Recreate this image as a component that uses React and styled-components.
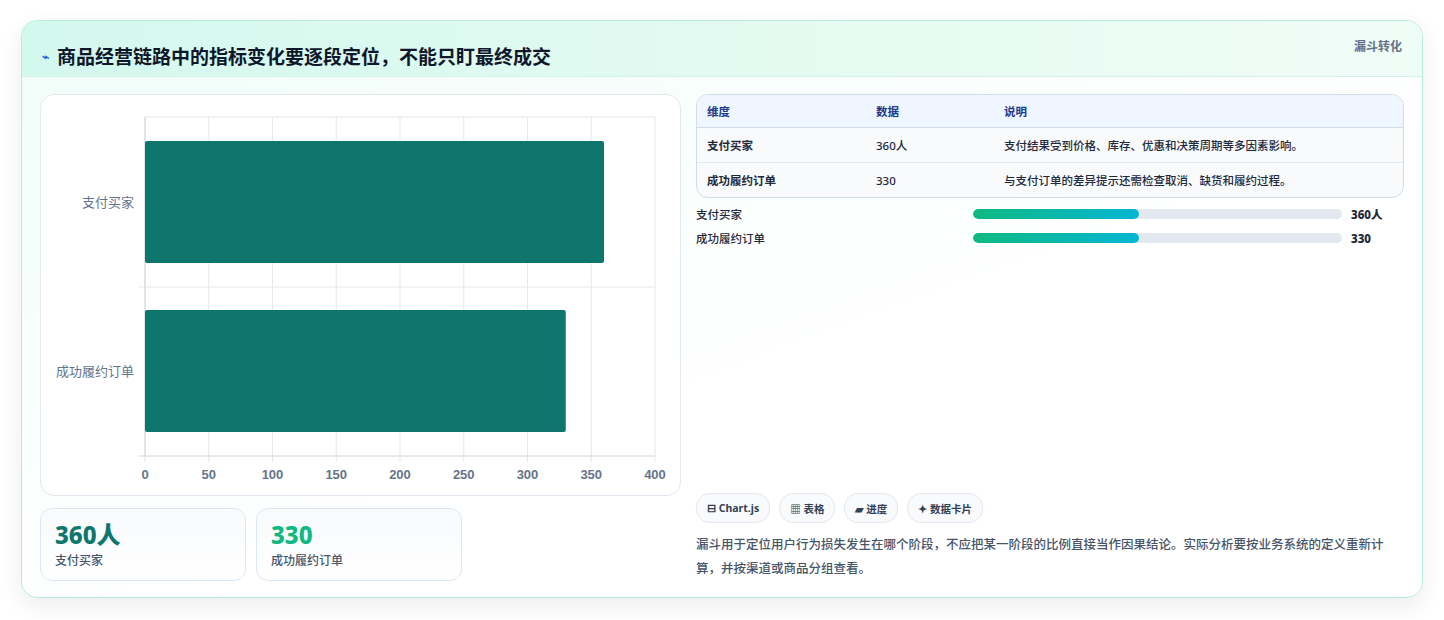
import styled, { createGlobalStyle } from "styled-components";

const Global = createGlobalStyle`
  body { margin: 0; background: #fff; font-family: "Noto Sans", "Noto Sans CJK SC", sans-serif; }
`;

const rows = [
  { name: "支付买家", value: 360, label: "360人", note: "支付结果受到价格、库存、优惠和决策周期等多因素影响。" },
  { name: "成功履约订单", value: 330, label: "330", note: "与支付订单的差异提示还需检查取消、缺货和履约过程。" },
];

const Page = styled.div`
  padding: 20px 21px 21px 21px;
`;

const Card = styled.div`
  height: 576px;
  border: 1px solid #b9ece0;
  border-radius: 16px;
  background: linear-gradient(160deg, #f0fdf8 0%, #ffffff 60%);
  box-shadow: 0 8px 22px rgba(15, 23, 42, 0.08);
  overflow: hidden;
  display: flex;
  flex-direction: column;
`;

const Header = styled.div`
  height: 55px;
  display: flex;
  justify-content: space-between;
  padding: 0 20px 0 20px;
  background: linear-gradient(90deg, #d3f8ee 0%, #e6fbf2 60%, #effdf7 100%);
  border-bottom: 1px solid #d5f1ea;
`;

const Title = styled.h1`
  margin: 0;
  padding-top: 15px;
  font-size: 19px;
  font-weight: 700;
  color: #0f172a;
  display: flex;
  align-items: center;
  gap: 8px;
`;

const Icon = styled.span`
  color: #2563eb;
  font-size: 12px;
`;

const Tag = styled.span`
  padding-top: 16px;
  font-size: 12px;
  font-weight: 700;
  color: #64748b;
`;

const Body = styled.div`
  flex: 1;
  display: grid;
  grid-template-columns: 641px 1fr;
  gap: 15px;
  padding: 17px 18px 16px 18px;
`;

const Col = styled.div`
  display: flex;
  flex-direction: column;
`;

const ChartCard = styled.div`
  height: 402px;
  border: 1px solid #e2e8f0;
  border-radius: 14px;
  background: #fff;
  box-sizing: border-box;
`;

const Stats = styled.div`
  display: flex;
  gap: 10px;
  margin-top: 12px;
`;

const Stat = styled.div`
  width: 206px;
  height: 73px;
  box-sizing: border-box;
  border: 1px solid #dbe7f3;
  border-radius: 12px;
  background: linear-gradient(180deg, #f8fafc, #ffffff);
  padding: 10px 14px;
`;

const StatValue = styled.div`
  font-size: 24px;
  font-weight: 800;
  line-height: 32px;
  color: ${(p) => p.$color};
`;

const StatLabel = styled.div`
  font-size: 12px;
  color: #475569;
  font-weight: 500;
`;

const Table = styled.table`
  width: 100%;
  border-collapse: separate;
  border-spacing: 0;
  border: 1px solid #cfdcea;
  border-radius: 12px;
  overflow: hidden;
  font-size: 11.5px;
  background: #f8fafc;
`;

const Th = styled.th`
  text-align: left;
  font-weight: 700;
  color: #1e3a8a;
  background: #eff6ff;
  height: 32px;
  padding: 0 10px;
  border-bottom: 1px solid #cfdcea;
  width: ${(p) => p.$w || "auto"};
`;

const Td = styled.td`
  height: 34px;
  padding: 0 10px;
  color: #1e293b;
  font-weight: ${(p) => (p.$bold ? 700 : 500)};
  border-top: ${(p) => (p.$first ? "none" : "1px solid #e2e8f0")};
`;

const Bars = styled.div`
  margin-top: 8px;
  display: flex;
  flex-direction: column;
  gap: 10px;
`;

const BarRow = styled.div`
  display: grid;
  grid-template-columns: 268px 369px 1fr;
  gap: 9px;
  align-items: center;
  font-size: 11.5px;
  height: 14px;
`;

const BarName = styled.span`
  color: #1e293b;
  font-weight: 500;
`;

const Track = styled.div`
  height: 10px;
  border-radius: 5px;
  background: #e2e8f0;
  overflow: hidden;
`;

const Fill = styled.div`
  height: 100%;
  border-radius: 5px;
  background: linear-gradient(90deg, #10b981, #06b6d4);
`;

const BarVal = styled.span`
  font-weight: 800;
  color: #1e293b;
`;

const Chips = styled.div`
  margin-top: auto;
  display: flex;
  gap: 9px;
`;

const Chip = styled.span`
  height: 28px;
  padding: 0 10px;
  display: inline-flex;
  align-items: center;
  border: 1px solid #e2e8f0;
  border-radius: 14px;
  background: #f8fafc;
  font-size: 10.5px;
  font-weight: 700;
  color: #334155;
`;

const Note = styled.p`
  margin: 10px 0 0 0;
  font-size: 12.5px;
  line-height: 24px;
  color: #475569;
  font-weight: 500;
`;

function Chart() {
  const x0 = 104, x1 = 614, y0 = 22, y1 = 361;
  const sx = (v) => x0 + (v / 400) * (x1 - x0);
  const ticks = [0, 50, 100, 150, 200, 250, 300, 350, 400];
  return (
    <svg width="640" height="400" style={{ display: "block" }}>
      {ticks.map((t) => (
        <line key={t} x1={sx(t)} x2={sx(t)} y1={y0} y2={y1 + 6} stroke="#e5e7eb" />
      ))}
      <line x1={x0} x2={x1} y1={y0} y2={y0} stroke="#e5e7eb" />
      <line x1={x0 - 6} x2={x1} y1={192} y2={192} stroke="#e5e7eb" />
      <line x1={x0} x2={x0} y1={y0} y2={y1} stroke="#d1d5db" />
      <line x1={x0 - 6} x2={x1} y1={y1} y2={y1} stroke="#d1d5db" />
      {rows.map((r, i) => {
        const top = i === 0 ? 46 : 215;
        return (
          <g key={r.name}>
            <rect x={x0} y={top} width={sx(r.value) - x0} height={122} rx="2" fill="#0f766e" />
            <text x={x0 - 11} y={top + 66} textAnchor="end" fontSize="13" fill="#64748b"
              fontFamily="Noto Sans, Noto Sans CJK SC, sans-serif">{r.name}</text>
          </g>
        );
      })}
      {ticks.map((t) => (
        <text key={t} x={sx(t)} y={y1 + 23} textAnchor="middle" fontSize="13" fontWeight="600"
          fill="#64748b" fontFamily="Liberation Sans, sans-serif">{t}</text>
      ))}
    </svg>
  );
}

export default function App() {
  return (
    <Page>
      <Global />
      <Card>
        <Header>
          <Title><Icon>⌁</Icon>商品经营链路中的指标变化要逐段定位，不能只盯最终成交</Title>
          <Tag>漏斗转化</Tag>
        </Header>
        <Body>
          <Col>
            <ChartCard><Chart /></ChartCard>
            <Stats>
              <Stat><StatValue $color="#0f766e">360人</StatValue><StatLabel>支付买家</StatLabel></Stat>
              <Stat><StatValue $color="#10b981">330</StatValue><StatLabel>成功履约订单</StatLabel></Stat>
            </Stats>
          </Col>
          <Col>
            <Table>
              <thead>
                <tr><Th $w="149px">维度</Th><Th $w="108px">数据</Th><Th>说明</Th></tr>
              </thead>
              <tbody>
                {rows.map((r, i) => (
                  <tr key={r.name}>
                    <Td $bold $first={i === 0}>{r.name}</Td>
                    <Td $first={i === 0}>{r.label}</Td>
                    <Td $first={i === 0}>{r.note}</Td>
                  </tr>
                ))}
              </tbody>
            </Table>
            <Bars>
              {rows.map((r) => (
                <BarRow key={r.name}>
                  <BarName>{r.name}</BarName>
                  <Track><Fill style={{ width: "45%" }} /></Track>
                  <BarVal>{r.label}</BarVal>
                </BarRow>
              ))}
            </Bars>
            <Chips>
              <Chip>⊟ Chart.js</Chip>
              <Chip>▦ 表格</Chip>
              <Chip>▰ 进度</Chip>
              <Chip>✦ 数据卡片</Chip>
            </Chips>
            <Note>漏斗用于定位用户行为损失发生在哪个阶段，不应把某一阶段的比例直接当作因果结论。实际分析要按业务系统的定义重新计算，并按渠道或商品分组查看。</Note>
          </Col>
        </Body>
      </Card>
    </Page>
  );
}
